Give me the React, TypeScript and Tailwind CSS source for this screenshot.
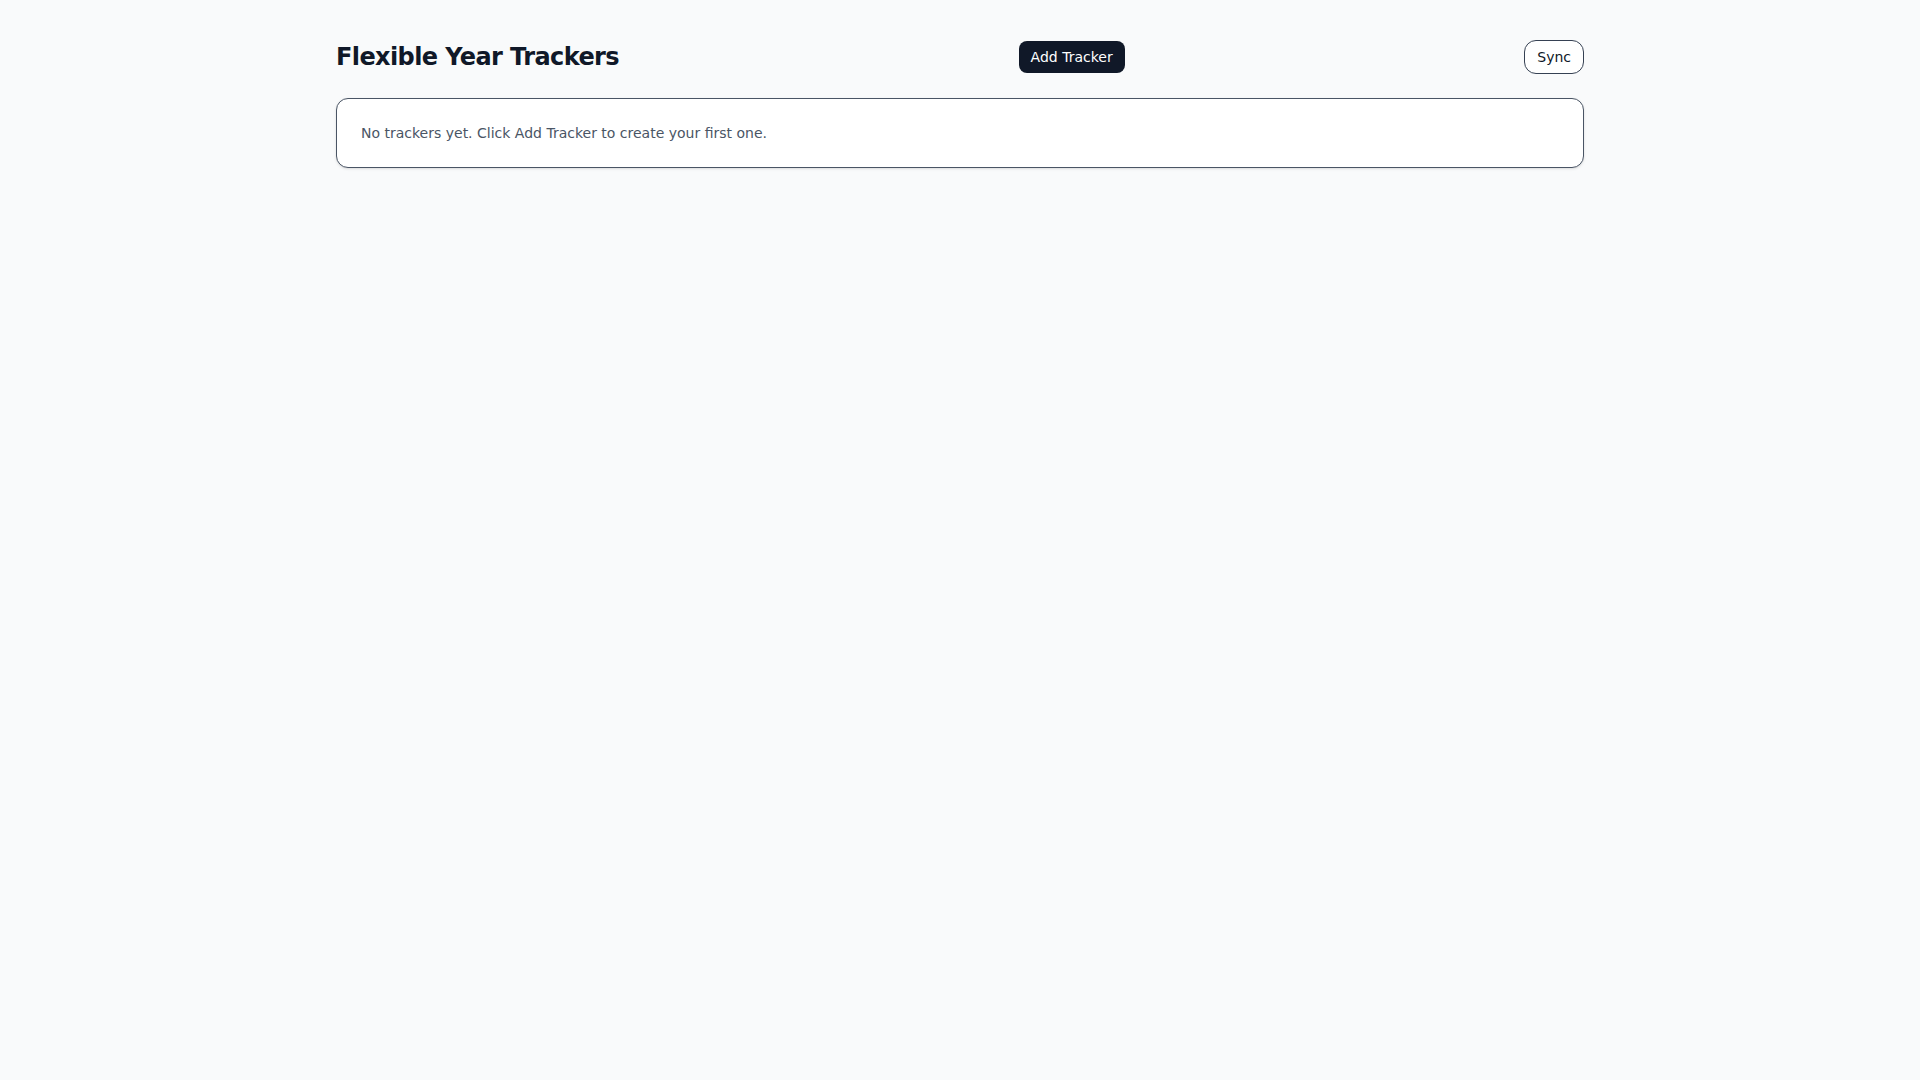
export default function App() {
  return (
    <div className="min-h-screen bg-gray-50 font-['DejaVu_Sans',sans-serif] text-gray-900">
      <div className="max-w-7xl mx-auto px-4 pt-10">
        {/* Header */}
        <header className="flex items-center justify-between mb-6">
          <h1 className="text-2xl font-bold tracking-tight text-gray-900">Flexible Year Trackers</h1>
          <button className="px-3 py-1.5 rounded-lg bg-gray-900 text-white text-sm">
            Add Tracker
          </button>
          <button className="px-3 py-1.5 rounded-xl border border-gray-700 bg-white text-sm text-gray-900">
            Sync
          </button>
        </header>

        {/* Empty state */}
        <div className="bg-white border border-gray-600 rounded-xl p-6 shadow-sm">
          <p className="text-sm text-gray-600">
            No trackers yet. Click Add Tracker to create your first one.
          </p>
        </div>
      </div>
    </div>
  );
}
